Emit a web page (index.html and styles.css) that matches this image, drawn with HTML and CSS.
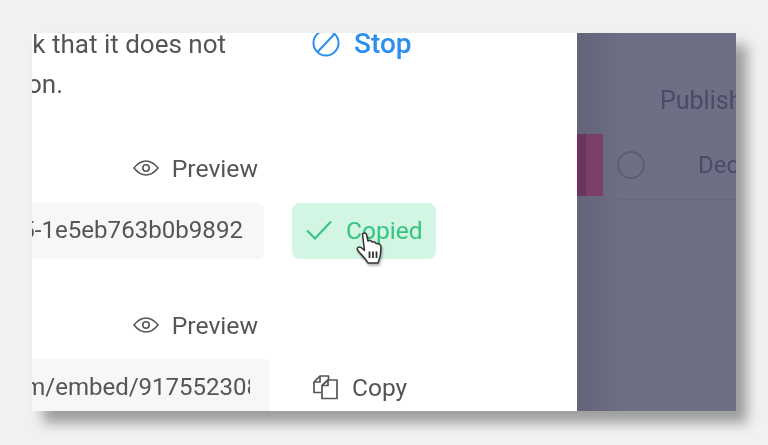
FILE: index.html
```html
<!DOCTYPE html>
<html>
<head>
    <meta charset="UTF-8">
    <meta name="viewport" content="width=device-width, initial-scale=1.0">
    <title>Embed Links</title>
    <link rel="stylesheet" href="styles.css">
</head>
<body>
    <div class="window">
        <div class="panel">
            <div class="row intro-row">
                <div class="intro">
                    <div class="intro-line line-one">check that it does not</div>
                    <div class="intro-line line-two">function.</div>
                </div>
                <button class="action stop">
                    <svg width="28" height="28" viewBox="0 0 28 28" fill="none" stroke="#2b8fee" stroke-width="2">
                        <circle cx="14" cy="14" r="12.500"/>
                        <path d="M5.500 23L22.500 5"/>
                    </svg>
                    Stop
                </button>
            </div>

            <div class="preview preview-one">
                <svg width="26" height="20" viewBox="0 0 26 20" fill="none" stroke="#555" stroke-width="1.600">
                    <path d="M1 10C5 5 9 3 13 3S21 5 25 10C21 15 17 17 13 17S5 15 1 10Z"/>
                    <circle cx="13" cy="10" r="3.200"/>
                </svg>
                <span>Preview</span>
            </div>
            <div class="row link-row">
                <div class="field field-short"><span>3f5-1e5eb763b0b9892</span></div>
                <button class="action copied">
                    <svg width="26" height="22" viewBox="0 0 26 22" fill="none" stroke="#33c47f" stroke-width="2">
                        <path d="M1 11.500L9 19.500L25 2.500"/>
                    </svg>
                    Copied
                </button>
            </div>

            <div class="preview preview-two">
                <svg width="26" height="20" viewBox="0 0 26 20" fill="none" stroke="#555" stroke-width="1.600">
                    <path d="M1 10C5 5 9 3 13 3S21 5 25 10C21 15 17 17 13 17S5 15 1 10Z"/>
                    <circle cx="13" cy="10" r="3.200"/>
                </svg>
                <span>Preview</span>
            </div>
            <div class="row embed-row">
                <div class="field field-long"><div class="clip"><span>com/embed/917552308</span></div></div>
                <button class="action copy">
                    <svg width="26" height="26" viewBox="0 0 26 26" fill="none" stroke="#555" stroke-width="1.700" stroke-linejoin="round">
                        <path d="M9 18.500H2V8L8 2H16.500V6"/>
                        <path d="M2 8H8V2"/>
                        <path d="M10 24.500V11.500L16 6H25V24.500Z"/>
                        <path d="M10 11.500H16V6"/>
                    </svg>
                    Copy
                </button>
            </div>

            <svg class="cursor" width="30" height="36" viewBox="0 0 30 36">
                <path d="M8.500 4C9.500 2.500 12 2.500 12.500 4.500L14 11C15.500 10 17.500 10.500 18 12C19.500 11.500 21.500 12 22 13.500C24 13 27 14.500 27 17L26.500 24C26 28 25 30 24 33H14C11.500 28 7 25 3.500 20C2.500 18 5 16 7 17.500L10.500 20.500Z" fill="#fff" stroke="#333" stroke-width="1.500" stroke-linejoin="round"/>
                <path d="M15.500 21.500V28M19 21.500V28M22.500 21.500V28" stroke="#333" stroke-width="1.800"/>
            </svg>
        </div>

        <div class="backdrop">
            <div class="head-cell">Publish</div>
            <div class="table-row">
                <div class="tag"></div>
                <div class="radio"></div>
                <div class="date">Dec</div>
            </div>
        </div>
    </div>
</body>
</html>
```

FILE: styles.css
```css
body {
    margin: 0;
    height: 445px;
    overflow: hidden;
    background-color: #f0f1f3;
    font-family: Roboto, "Liberation Sans", sans-serif;
    color: #555;
}
.window {
    display: flex;
    width: 704px;
    height: 378px;
    margin: 33px 0 0 32px;
    box-shadow: 11px 12px 12px rgba(0, 0, 0, 0.35);
    filter: blur(0.4px);
}
.panel {
    position: relative;
    width: 545px;
    background-color: #fff;
    overflow: hidden;
}
.row {
    display: flex;
}
.intro-row {
    height: 80px;
    margin-top: -9px;
}
.intro {
    width: 238px;
    overflow: hidden;
    font-size: 26px;
    line-height: 40px;
}
.intro-line {
    display: flex;
    justify-content: flex-end;
    white-space: nowrap;
}
.line-one {
    padding-right: 44px;
}
.line-two {
    padding-right: 207px;
}
.action {
    display: flex;
    align-items: center;
    height: 56px;
    padding: 0;
    border: none;
    background: none;
    color: #555;
    font-family: inherit;
    font-size: 25px;
}
.stop {
    gap: 14px;
    height: 38px;
    margin-left: 42px;
    color: #2b8fee;
    font-size: 28px;
    font-weight: 500;
}
.preview {
    display: flex;
    align-items: center;
    justify-content: flex-end;
    gap: 13px;
    width: 226px;
    height: 30px;
    font-size: 24.7px;
}
.preview-one {
    margin-top: 49px;
}
.preview-two {
    margin-top: 51px;
}
.link-row {
    margin-top: 20px;
}
.embed-row {
    margin-top: 19px;
}
.field {
    display: flex;
    align-items: center;
    justify-content: flex-end;
    height: 56px;
    box-sizing: border-box;
    overflow: hidden;
    background-color: #f6f7f9;
    border-radius: 0 6px 6px 0;
    font-size: 24.1px;
    white-space: nowrap;
}
.field-short {
    width: 232px;
    padding-right: 21px;
    padding-bottom: 2px;
}
.field-long {
    width: 238px;
    padding-right: 20px;
    font-size: 24px;
}
.clip {
    width: 218px;
    overflow: hidden;
}
.clip span {
    margin-left: -34px;
}
.copied {
    gap: 14px;
    width: 144px;
    margin-left: 28px;
    padding-left: 14px;
    padding-bottom: 2px;
    box-sizing: border-box;
    background-color: #d3f5e3;
    border-radius: 8px;
    color: #33c47f;
    font-size: 24.5px;
}
.copy {
    gap: 14px;
    margin-left: 42px;
    font-size: 24.5px;
}
.cursor {
    position: absolute;
    left: 322px;
    top: 197px;
    filter: drop-shadow(1px 2px 1px rgba(0, 0, 0, 0.3));
}
.backdrop {
    flex: 1;
    overflow: hidden;
    background: linear-gradient(to right, #63637a, #6d6f85 30%);
    color: #4a4b66;
    font-size: 25px;
    white-space: nowrap;
}
.head-cell {
    height: 101px;
    padding-left: 83px;
    box-sizing: border-box;
    line-height: 135px;
}
.table-row {
    display: flex;
    align-items: center;
    height: 62px;
    border-bottom: 1px solid #666880;
    padding-bottom: 3px;
}
.tag {
    flex-shrink: 0;
    width: 26px;
    height: 62px;
    background: linear-gradient(to right, #6a3560 9px, #7a4069 9px);
}
.radio {
    flex-shrink: 0;
    width: 24px;
    height: 24px;
    margin-left: 14px;
    border: 2px solid #5d5e74;
    border-radius: 50%;
}
.date {
    margin-left: 53px;
    font-size: 24px;
}
```
